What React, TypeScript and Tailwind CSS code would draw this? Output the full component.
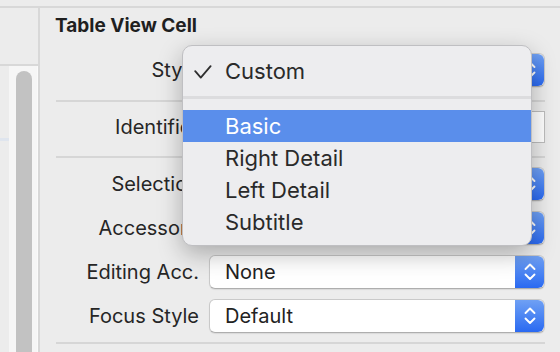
import React from "react";

function Stepper() {
  return (
    <div className="w-[29px] h-full flex items-center justify-center bg-gradient-to-b from-[#6fa0f4] to-[#2a69f1] rounded-r-[6px]">
      <svg width="12" height="20" viewBox="0 0 12 20" fill="none">
        <path d="M1.5 7 L6 2.5 L10.5 7" stroke="white" strokeWidth="1.9" strokeLinecap="round" strokeLinejoin="round" />
        <path d="M1.5 12.5 L6 17 L10.5 12.5" stroke="white" strokeWidth="1.9" strokeLinecap="round" strokeLinejoin="round" />
      </svg>
    </div>
  );
}

function Popup({ value }: { value: string }) {
  return (
    <div className="w-[336px] h-[34px] flex rounded-[6px] bg-white border border-[#c9c9c9] border-b-[#aeaeae] shadow-[0_1px_1px_rgba(0,0,0,0.08)]">
      <div className="flex-1 flex items-center pl-[15px] text-[20px] text-[#222]">{value}</div>
      <Stepper />
    </div>
  );
}

function Row({ label, children, className = "" }: { label: string; children?: React.ReactNode; className?: string }) {
  return (
    <div className={"flex items-center h-[34px] " + className}>
      <div className="w-[143px] text-right text-[20px] text-[#262626] whitespace-nowrap">{label}</div>
      <div className="ml-[10px] h-full flex items-center">{children}</div>
    </div>
  );
}

export default function App() {
  return (
    <div className="relative w-[560px] h-[352px] overflow-hidden bg-[#ececec] font-['Inter',sans-serif] text-[#262626]">
      <div className="h-[6px]" />
      <div className="h-[2px] bg-[#d8d8d8]" />
      <div className="flex h-[344px]">
        <div className="w-[38px] flex flex-col">
          <div className="h-[56px]" />
          <div className="h-[2px] bg-[#d8d8d8]" />
          <div className="flex flex-1">
            <div className="w-[9px] pt-[72px]">
              <div className="h-[3px] bg-[#dfe5ee]" />
            </div>
            <div className="w-[28px] bg-[#f6f6f6] pl-[7px] pt-[5px]">
              <div className="w-[16px] h-full rounded-t-full bg-[#c2c2c2]" />
            </div>
            <div className="w-[1px] bg-[#fafafa]" />
          </div>
        </div>
        <div className="w-[2px] bg-[#d8d8d8]" />
        <div className="flex-1 pl-[16px] pr-[15px] flex flex-col">
          <div className="mt-[6px] h-[24px] leading-[24px] -ml-[1px] text-[19px] font-bold text-[#1f1f1f] whitespace-nowrap">Table View Cell</div>
          <Row label="Style" className="mt-[15px]">
            <Popup value="Custom" />
          </Row>
          <div className="mt-[13px] h-[2px] bg-[#d6d6d6]" />
          <Row label="Identifier" className="mt-[8px]">
            <div className="w-[336px] h-[32px] bg-white border border-[#bdbdbd]" />
          </Row>
          <div className="mt-[12px] h-[2px] bg-[#d6d6d6]" />
          <Row label="Selection" className="mt-[9px]">
            <Popup value="Default" />
          </Row>
          <Row label="Accessory" className="mt-[10px]">
            <Popup value="None" />
          </Row>
          <Row label="Editing Acc." className="mt-[10px]">
            <Popup value="None" />
          </Row>
          <Row label="Focus Style" className="mt-[10px]">
            <Popup value="Default" />
          </Row>
          <div className="mt-[9px] h-[2px] bg-[#d6d6d6]" />
        </div>
      </div>

      <div className="absolute left-[182px] top-[45px] w-[350px] h-[201px] rounded-[10px] bg-[#ededef] border border-[#bfbfc2] shadow-[0_8px_24px_rgba(0,0,0,0.28)] pt-[9px] text-[22px] text-[#2a2a2a]">
        <div className="relative h-[32px] flex items-center pl-[42px]">
          <svg className="absolute left-[11px] top-[10px]" width="18" height="14" viewBox="0 0 18 14" fill="none">
            <path d="M1.2 6.2 L6.8 12.6 L16.6 1.2" stroke="#2e2e2e" strokeWidth="1.8" strokeLinecap="round" strokeLinejoin="round" />
          </svg>
          Custom
        </div>
        <div className="mt-[9px] h-[3px] bg-[#dcdcde]" />
        <div className="mt-[11px] h-[32px] flex items-center pl-[42px] bg-[#5a8eeb] text-white">Basic</div>
        <div className="h-[32px] flex items-center pl-[42px]">Right Detail</div>
        <div className="h-[32px] flex items-center pl-[42px]">Left Detail</div>
        <div className="h-[32px] flex items-center pl-[42px]">Subtitle</div>
      </div>
    </div>
  );
}
